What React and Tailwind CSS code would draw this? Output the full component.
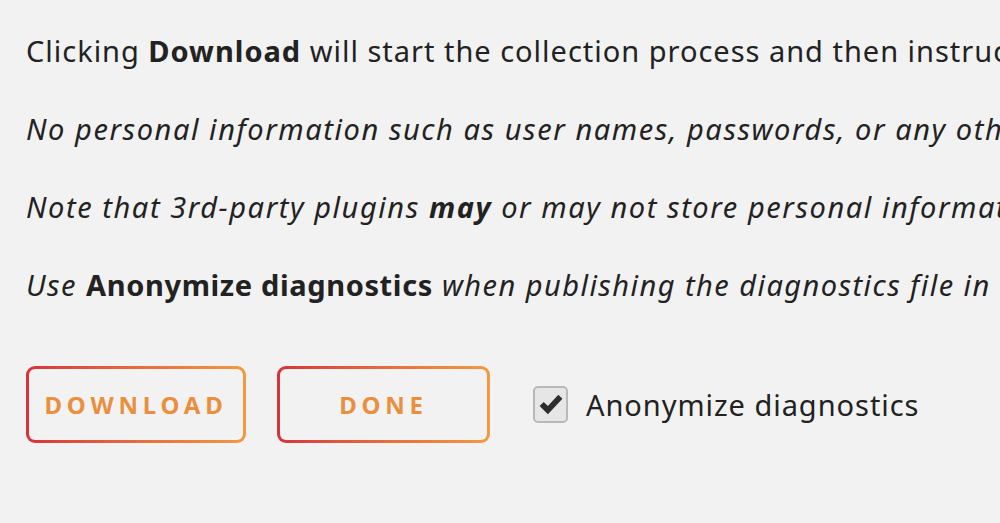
import { useState } from "react";

function GradientButton({ label, width }) {
  return (
    <button
      className={`rounded-[9px] bg-gradient-to-r from-[#d6323b] to-[#f19a40] p-[3px] ${width}`}
    >
      <span className="flex h-[71px] items-center justify-center rounded-[6px] bg-[#f2f2f2] text-[24px] font-bold tracking-[0.2em] text-[#ea8f3d]">
        {label}
      </span>
    </button>
  );
}

function Checkbox({ checked, onChange }) {
  return (
    <button
      onClick={() => onChange(!checked)}
      className="flex h-[37px] w-[35px] items-center justify-center rounded-[5px] border-2 border-[#b9b9b9] bg-[#e6e6e6]"
    >
      {checked && (
        <svg width="27" height="25" viewBox="0 0 26 24">
          <path
            d="M2.5 13.5 L6.5 9.5 L10.5 13.5 L20.5 2.5 L24.5 6.5 L10.5 21.5 Z"
            fill="#2e2e2e"
            strokeLinejoin="round"
          />
        </svg>
      )}
    </button>
  );
}

export default function App() {
  const [anonymize, setAnonymize] = useState(true);

  return (
    <div className="h-[523px] w-[1000px] overflow-hidden bg-[#f2f2f2] pl-[26px] pt-[31px] font-['Noto_Sans',sans-serif] text-[#222]">
      <div className="flex flex-col gap-[38px] whitespace-nowrap text-[29px] leading-[40px]">
        <p className="tracking-[0.034em]">
          Clicking <b>Download</b> will start the collection process and then
          instruct you to save the file.
        </p>
        <p className="italic tracking-[0.054em]">
          No personal information such as user names, passwords, or any other
          credentials is collected.
        </p>
        <p className="italic tracking-[0.054em]">
          Note that 3rd-party plugins <b>may</b> or may not store personal
          information in their settings.
        </p>
        <p className="italic tracking-[0.05em]">
          Use <b className="not-italic tracking-[0.022em]">Anonymize diagnostics</b>{" "}
          when publishing the diagnostics file in a public place.
        </p>
      </div>

      <div className="mt-[61px] flex items-center">
        <GradientButton label="DOWNLOAD" width="w-[220px]" />
        <div className="ml-[31px]">
          <GradientButton label="DONE" width="w-[213px]" />
        </div>
        <div className="ml-[43px] flex items-center gap-[18px]">
          <Checkbox checked={anonymize} onChange={setAnonymize} />
          <span className="text-[29px] tracking-[0.033em]">
            Anonymize diagnostics
          </span>
        </div>
      </div>
    </div>
  );
}
